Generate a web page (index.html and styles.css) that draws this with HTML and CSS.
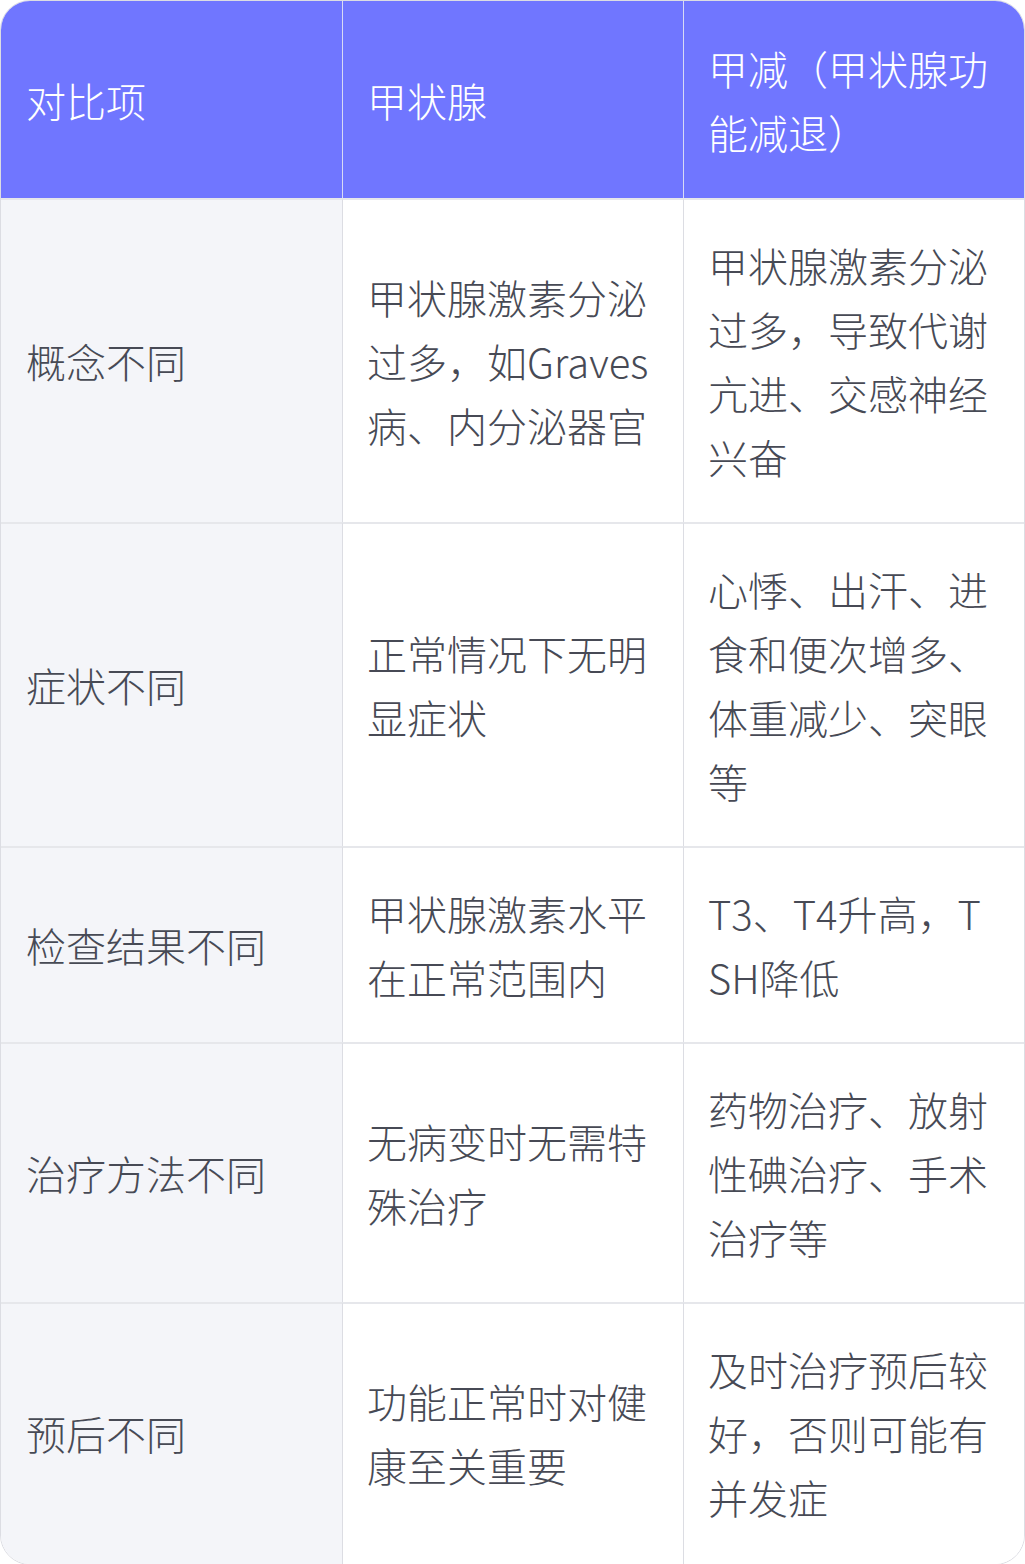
FILE: index.html
```html
<!DOCTYPE html>
<html lang="zh-CN">
<head>
<meta charset="utf-8">
<title>甲状腺与甲减对比</title>
<link rel="stylesheet" href="styles.css">
</head>
<body>
<div class="table-wrap">
<table class="compare">
<colgroup><col class="c1"><col class="c2"><col class="c3"></colgroup>
<thead>
<tr><th>对比项</th><th>甲状腺</th><th>甲减（甲状腺功能减退）</th></tr>
</thead>
<tbody>
<tr><td>概念不同</td><td>甲状腺激素分泌过多，如Graves病、内分泌器官</td><td>甲状腺激素分泌过多，导致代谢亢进、交感神经兴奋</td></tr>
<tr><td>症状不同</td><td>正常情况下无明显症状</td><td>心悸、出汗、进食和便次增多、体重减少、突眼等</td></tr>
<tr><td>检查结果不同</td><td>甲状腺激素水平在正常范围内</td><td>T3、T4升高，TSH降低</td></tr>
<tr><td>治疗方法不同</td><td>无病变时无需特殊治疗</td><td>药物治疗、放射性碘治疗、手术治疗等</td></tr>
<tr class="last"><td>预后不同</td><td>功能正常时对健康至关重要</td><td>及时治疗预后较好，否则可能有并发症</td></tr>
</tbody>
</table>
</div>
</body>
</html>
```
FILE: styles.css
```css
html, body {
  margin: 0;
  padding: 0;
  background: #ffffff;
}
.table-wrap {
  width: 1025px;
  box-sizing: border-box;
  border: 1px solid #dcdde3;
  border-radius: 30px;
  overflow: hidden;
}
.compare {
  width: 100%;
  table-layout: fixed;
  border-collapse: separate;
  border-spacing: 0;
  font-family: "Noto Sans CJK SC", "Noto Sans", sans-serif;
  font-weight: 300;
  font-size: 40px;
  line-height: 64px;
  color: #474a55;
  word-break: break-all;
}
.compare th,
.compare td {
  padding: 33px 28px 33px 24px;
  text-align: left;
  vertical-align: middle;
  border-left: 1px solid #dcdde3;
  border-top: 2px solid #e6e7eb;
}
.compare th:first-child,
.compare td:first-child {
  border-left: none;
  padding-left: 25px;
}
.compare th {
  background: #7076ff;
  color: #ffffff;
  font-weight: 300;
  border-top: none;
  border-left-color: #d8daf5;
  padding-top: 35px;
  padding-bottom: 34px;
}
.compare td:first-child {
  background: #f4f5f9;
}
.compare td {
  background: #ffffff;
}
.compare tr.last td {
  padding-bottom: 35px;
}
```
